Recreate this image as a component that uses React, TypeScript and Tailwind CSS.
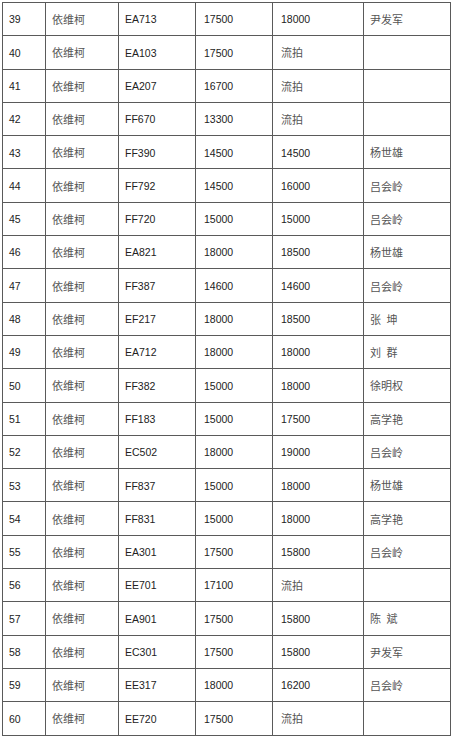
const rows: [string, string, string, string, string][] = [
  ['39', 'EA713', '17500', '18000', '尹发军'],
  ['40', 'EA103', '17500', '流拍', ''],
  ['41', 'EA207', '16700', '流拍', ''],
  ['42', 'FF670', '13300', '流拍', ''],
  ['43', 'FF390', '14500', '14500', '杨世雄'],
  ['44', 'FF792', '14500', '16000', '吕会岭'],
  ['45', 'FF720', '15000', '15000', '吕会岭'],
  ['46', 'EA821', '18000', '18500', '杨世雄'],
  ['47', 'FF387', '14600', '14600', '吕会岭'],
  ['48', 'EF217', '18000', '18500', '张 坤'],
  ['49', 'EA712', '18000', '18000', '刘 群'],
  ['50', 'FF382', '15000', '18000', '徐明权'],
  ['51', 'FF183', '15000', '17500', '高学艳'],
  ['52', 'EC502', '18000', '19000', '吕会岭'],
  ['53', 'FF837', '15000', '18000', '杨世雄'],
  ['54', 'FF831', '15000', '18000', '高学艳'],
  ['55', 'EA301', '17500', '15800', '吕会岭'],
  ['56', 'EE701', '17100', '流拍', ''],
  ['57', 'EA901', '17500', '15800', '陈 斌'],
  ['58', 'EC301', '17500', '15800', '尹发军'],
  ['59', 'EE317', '18000', '16200', '吕会岭'],
  ['60', 'EE720', '17500', '流拍', ''],
];

const num = "font-['Liberation_Sans','Noto_Sans_CJK_SC',sans-serif] text-[10.5px] text-[#222]";
const cjk = "font-['Noto_Sans_CJK_SC',sans-serif] text-[11px] text-[#555]";
const isCjk = (s: string) => /[\u4e00-\u9fff]/.test(s);

export default function App() {
  return (
    <div className="w-[453px] h-[740px] bg-white pt-[2px] pl-[2px]">
      <table className="table-fixed border-collapse w-[448px]">
        <colgroup>
          <col className="w-[43px]" />
          <col className="w-[73px]" />
          <col className="w-[77px]" />
          <col className="w-[77px]" />
          <col className="w-[91px]" />
          <col className="w-[87px]" />
        </colgroup>
        <tbody>
          {rows.map((r) => (
            <tr key={r[0]} className="h-[33.3px]">
              {[r[0], '依维柯', r[1], r[2], r[3], r[4]].map((c, i) => (
                <td
                  key={i}
                  className={`border border-[#5a5a5a] p-0 pt-[1px] align-middle leading-none ${
                    i === 3 || i === 4 ? 'pl-[8px]' : 'pl-[6px]'
                  } ${isCjk(c) ? cjk : num}`}
                >
                  <span className="whitespace-pre">{c.replace(' ', '\u2002')}</span>
                </td>
              ))}
            </tr>
          ))}
        </tbody>
      </table>
    </div>
  );
}
